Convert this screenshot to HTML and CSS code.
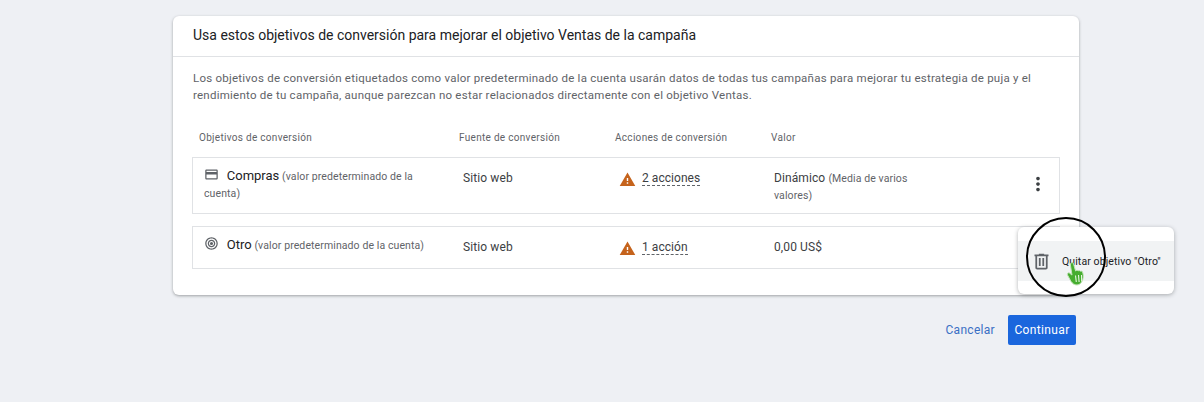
FILE: index.html

```html
<!DOCTYPE html>
<html>
<head>
    <meta charset="utf-8">
    <title>Objetivos de conversión</title>
    <link rel="stylesheet" href="styles.css">
</head>
<body>
    <div class="card">
        <div class="card-title">Usa estos objetivos de conversión para mejorar el objetivo Ventas de la campaña</div>
        <div class="card-body">
            <p class="intro">Los objetivos de conversión etiquetados como valor predeterminado de la cuenta usarán datos de todas tus campañas para mejorar tu estrategia de puja y el rendimiento de tu campaña, aunque parezcan no estar relacionados directamente con el objetivo Ventas.</p>

            <div class="table-head">
                <div>Objetivos de conversión</div>
                <div>Fuente de conversión</div>
                <div>Acciones de conversión</div>
                <div>Valor</div>
            </div>

            <div class="row row-first">
                <div class="goal">
                    <svg class="goal-icon" viewBox="0 0 24 24"><path d="M20 4H4c-1.11 0-2 .89-2 2v12c0 1.11.89 2 2 2h16c1.11 0 2-.89 2-2V6c0-1.11-.89-2-2-2zm0 14H4v-6h16v6zm0-10H4V6h16v2z"/></svg>
                    <span class="goal-name">Compras</span> <span class="small">(valor predeterminado de la cuenta)</span>
                </div>
                <div class="cell">Sitio web</div>
                <div class="cell actions">
                    <svg class="warn" viewBox="0 0 24 24"><path d="M1 21h22L12 2 1 21zm12-3h-2v-2h2v2zm0-4h-2v-4h2v4z"/></svg>
                    <span class="action-link">2 acciones</span>
                </div>
                <div class="cell value">Dinámico <span class="small">(Media de varios valores)</span></div>
                <svg class="more" viewBox="0 0 24 24"><path d="M12 8c1.1 0 2-.9 2-2s-.9-2-2-2-2 .9-2 2 .9 2 2 2zm0 2c-1.1 0-2 .9-2 2s.9 2 2 2 2-.9 2-2-.9-2-2-2zm0 6c-1.1 0-2 .9-2 2s.9 2 2 2 2-.9 2-2-.9-2-2-2z"/></svg>
            </div>

            <div class="row row-second">
                <div class="goal">
                    <svg class="goal-icon" viewBox="0 0 24 24"><path d="M12 2C6.48 2 2 6.48 2 12s4.480 10 10 10 10-4.480 10-10S17.520 2 12 2zm0 18c-4.420 0-8-3.580-8-8s3.580-8 8-8 8 3.580 8 8-3.580 8-8 8zm0-14c-3.310 0-6 2.690-6 6s2.690 6 6 6 6-2.690 6-6-2.690-6-6-6zm0 10c-2.210 0-4-1.790-4-4s1.790-4 4-4 4 1.790 4 4-1.790 4-4 4zm0-6.500a2.500 2.500 0 1 0 0 5 2.500 2.500 0 0 0 0-5z"/></svg>
                    <span class="goal-name">Otro</span> <span class="small">(valor predeterminado de la cuenta)</span>
                </div>
                <div class="cell">Sitio web</div>
                <div class="cell actions">
                    <svg class="warn" viewBox="0 0 24 24"><path d="M1 21h22L12 2 1 21zm12-3h-2v-2h2v2zm0-4h-2v-4h2v4z"/></svg>
                    <span class="action-link">1 acción</span>
                </div>
                <div class="cell value">0,00 US$</div>
            </div>
        </div>
    </div>

    <div class="footer">
        <a class="cancel">Cancelar</a>
        <button type="button" class="btn">Continuar</button>
    </div>

    <div class="menu">
        <div class="menu-item">
            <svg class="trash" viewBox="0 0 24 24"><path d="M15 4V3H9v1H4v2h1v13c0 1.100.9 2 2 2h10c1.100 0 2-.9 2-2V6h1V4h-5zm2 15H7V6h10v13zM9 8h2v9H9V8zm4 0h2v9h-2V8z"/></svg>
            <span>Quitar objetivo "Otro"</span>
        </div>
    </div>
    <div class="circle"></div>
    <svg class="cursor" viewBox="0 0 22 24"><path d="M5 1c1-.8 2.300-.3 2.600 1l2 7 .8-.5c.8-.4 1.600 0 1.800.5.600-.6 1.700-.5 2.200.3.700-.5 1.800-.2 2.200.7.800 2.500 1 5 .2 7.500-1 3-3 5.500-5.800 5.500-2.500 0-4.400-1.400-6-3.600L1.500 13c-.8-1.300.8-2.800 2-1.900l2.500 2L4.400 3c-.1-.8.100-1.500.6-2z" fill="#46ad2f" stroke="#c4e4ba" stroke-width="1"/><path d="M9.500 13.500l.8 6.500M12.500 13l.6 7M15.500 13l.2 6.500" stroke="#e8f5e2" stroke-width="1.100" fill="none"/></svg>
</body>
</html>
```

FILE: styles.css

```css
html,
body {
    margin: 0;
    height: 100%;
    overflow: hidden;
}
body {
    position: relative;
    background: #eef0f4;
    font-family: Roboto, "Noto Sans", sans-serif;
    color: #3c4043;
}
.card {
    width: 906px;
    height: 279px;
    margin: 16px 0 0 173px;
    background: #fff;
    border-radius: 6px;
    box-shadow: 0 1px 3px rgba(60, 64, 67, 0.45);
}
.card-title {
    height: 40px;
    line-height: 38px;
    padding-left: 20px;
    border-bottom: 1px solid #e0e2e5;
    font-size: 14px;
    color: #202124;
}
.card-body {
    padding: 0 19px;
}
.intro {
    margin: 0;
    padding: 13px 0 0 1px;
    width: 860px;
    font-size: 11.5px;
    line-height: 17px;
    letter-spacing: 0.24px;
    color: #5f6368;
}
.table-head {
    display: grid;
    grid-template-columns: 260px 156px 156px 1fr;
    padding: 27px 0 0 7px;
    font-size: 10px;
    line-height: 14px;
    letter-spacing: 0.3px;
    color: #5f6368;
}
.row {
    display: grid;
    grid-template-columns: 259px 156px 155px 150px;
    border: 1px solid #e0e2e5;
    padding-left: 11px;
    position: relative;
}
.row-first {
    height: 55px;
    margin-top: 12px;
}
.row-second {
    height: 41px;
    margin-top: 12px;
}
.goal {
    padding-top: 9px;
    width: 235px;
    font-size: 10.5px;
    line-height: 17px;
    letter-spacing: 0.15px;
    color: #5f6368;
}
.goal-icon {
    width: 15px;
    height: 15px;
    margin: 0 5px 0 0;
    vertical-align: -2px;
    fill: #5f6368;
}
.goal-name {
    font-size: 13px;
    letter-spacing: 0;
    color: #202124;
}
.cell {
    padding-top: 12px;
    font-size: 12px;
    line-height: 17px;
    letter-spacing: 0.1px;
}
.actions {
    display: flex;
    align-items: flex-start;
    gap: 6px;
}
.warn {
    width: 17px;
    height: 17px;
    margin-top: 1px;
    fill: #c5631c;
}
.action-link {
    height: 15px;
    border-bottom: 1px dashed #5f6368;
    letter-spacing: 0.05px;
}
.small {
    font-size: 10.5px;
    line-height: 17px;
    letter-spacing: 0.1px;
    color: #5f6368;
}
.more {
    position: absolute;
    top: 15px;
    right: 10px;
    width: 22px;
    height: 22px;
    fill: #3c4043;
}
.footer {
    display: flex;
    align-items: center;
    justify-content: flex-end;
    gap: 13px;
    width: 1076px;
    margin-top: 20px;
}
.cancel {
    font-size: 12px;
    letter-spacing: 0.3px;
    color: #3a6fc4;
}
.btn {
    width: 68px;
    height: 30px;
    padding: 0;
    border: 0;
    border-radius: 2px;
    background: #1a66dd;
    font-family: Roboto, sans-serif;
    font-size: 12px;
    letter-spacing: 0.35px;
    color: #fff;
}
.menu {
    position: absolute;
    left: 1018px;
    top: 227px;
    width: 156px;
    height: 67px;
    padding: 14px 0 13px;
    box-sizing: border-box;
    background: #fff;
    border-radius: 6px;
    box-shadow: 0 1px 4px rgba(60, 64, 67, 0.4);
}
.menu-item {
    display: flex;
    align-items: center;
    gap: 10px;
    height: 40px;
    padding-left: 13px;
    background: #f1f3f4;
    font-size: 10.5px;
    letter-spacing: 0.1px;
    color: #202124;
}
.trash {
    width: 21px;
    height: 21px;
    fill: #5f6368;
}
.circle {
    position: absolute;
    left: 1026px;
    top: 217px;
    width: 76px;
    height: 76px;
    border: 2px solid #000;
    border-radius: 50%;
}
.cursor {
    position: absolute;
    left: 1066px;
    top: 262px;
    width: 22px;
    height: 24px;
}
```
